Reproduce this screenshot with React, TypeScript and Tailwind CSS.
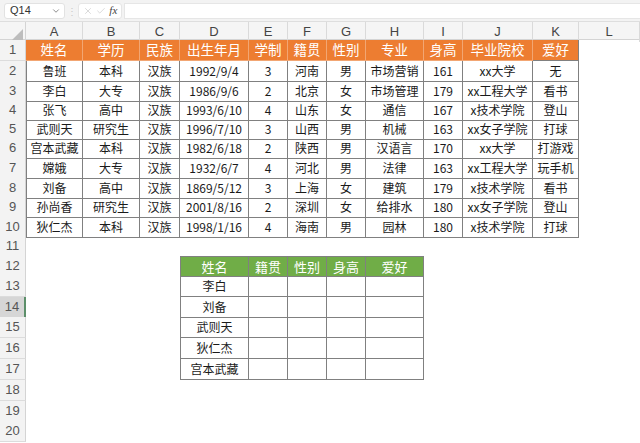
import { ChevronDown, X, Check } from "lucide-react"

const colLetters = ["A", "B", "C", "D", "E", "F", "G", "H", "I", "J", "K", "L"]
const gridCols = "grid grid-cols-[26px_57px_57px_40px_69px_39px_39px_39px_58px_39px_70px_46px_1fr]"

const rowHeights = [
  "h-[21px]", "h-[20px]", "h-[19px]", "h-[19px]", "h-[19px]",
  "h-[20px]", "h-[20px]", "h-[19px]", "h-[20px]", "h-[19px]",
  "h-[20px]", "h-[20px]", "h-[21px]", "h-[20px]", "h-[21px]",
  "h-[21px]", "h-[21px]", "h-[21px]", "h-[20px]", "h-[21px]",
]

const header = ["姓名", "学历", "民族", "出生年月", "学制", "籍贯", "性别", "专业", "身高", "毕业院校", "爱好"]
const data = [
  ["鲁班", "本科", "汉族", "1992/9/4", "3", "河南", "男", "市场营销", "161", "xx大学", "无"],
  ["李白", "大专", "汉族", "1986/9/6", "2", "北京", "女", "市场管理", "179", "xx工程大学", "看书"],
  ["张飞", "高中", "汉族", "1993/6/10", "4", "山东", "女", "通信", "167", "x技术学院", "登山"],
  ["武则天", "研究生", "汉族", "1996/7/10", "3", "山西", "男", "机械", "163", "xx女子学院", "打球"],
  ["宫本武藏", "本科", "汉族", "1982/6/18", "2", "陕西", "男", "汉语言", "170", "xx大学", "打游戏"],
  ["嫦娥", "大专", "汉族", "1932/6/7", "4", "河北", "男", "法律", "163", "xx工程大学", "玩手机"],
  ["刘备", "高中", "汉族", "1869/5/12", "3", "上海", "女", "建筑", "179", "x技术学院", "看书"],
  ["孙尚香", "研究生", "汉族", "2001/8/16", "2", "深圳", "女", "给排水", "180", "xx女子学院", "登山"],
  ["狄仁杰", "本科", "汉族", "1998/1/16", "4", "海南", "男", "园林", "180", "x技术学院", "打球"],
]
const lookupHeader = ["姓名", "籍贯", "性别", "身高", "爱好"]
const lookupNames = ["李白", "刘备", "武则天", "狄仁杰", "宫本武藏"]

function cellsFor(row: number): { text: string; cls: string }[] {
  const out: { text: string; cls: string }[] = []
  for (let c = 0; c < 12; c++) {
    let text = ""
    let cls = ""
    if (row === 1 && c < 11) {
      text = header[c]
      cls = "bg-[#ed7d31] text-white text-[13.5px] border-r border-b border-[#f2a673]"
      if (c === 10) cls = "bg-[#ed7d31] text-white text-[13.5px] border-r border-b border-[#808080]"
    } else if (row >= 2 && row <= 10 && c < 11) {
      text = data[row - 2][c]
      cls = "text-[#1a1a1a] text-[12px] border-r border-b border-[#808080]"
      if (c === 0) cls += " border-l"
    } else if (row === 12 && c >= 3 && c <= 7) {
      text = lookupHeader[c - 3]
      cls = "bg-[#70ad47] text-white text-[13px] border-r border-b border-t border-[#808080]"
      if (c === 3) cls += " border-l"
    } else if (row >= 13 && row <= 17 && c >= 3 && c <= 7) {
      text = c === 3 ? lookupNames[row - 13] : ""
      cls = "text-[#1a1a1a] text-[12px] border-r border-b border-[#808080]"
      if (c === 3) cls += " border-l"
    }
    out.push({ text, cls })
  }
  return out
}

export default function App() {
  return (
    <div
      className="w-[640px] h-[443px] overflow-hidden bg-white"
      style={{ fontFamily: '"Noto Sans CJK SC", "Noto Sans", sans-serif' }}
    >
      {/* formula bar */}
      <div className="h-[22px] bg-[#f3f3f3] flex items-center gap-0 pl-[4px] border-b border-[#dedede]">
        <div className="w-[61px] h-[16px] bg-white rounded-[3px] border border-[#e2e2e2] flex items-center justify-between pl-[5px] pr-[3px]">
          <span className="text-[11px] text-[#333]" style={{ fontFamily: '"Liberation Sans", sans-serif' }}>Q14</span>
          <ChevronDown className="w-[10px] h-[10px] text-[#777]" strokeWidth={2} />
        </div>
        <div className="w-[13px] flex justify-center text-[#c8c8c8] text-[10px] leading-none">⋮</div>
        <div className="w-[44px] h-[16px] bg-white rounded-[3px] border border-[#e6e6e6] flex items-center justify-around px-[2px]">
          <X className="w-[10px] h-[10px] text-[#c4c4c4]" strokeWidth={1.5} />
          <Check className="w-[10px] h-[10px] text-[#c4c4c4]" strokeWidth={1.5} />
          <span className="text-[11px] italic text-[#444]" style={{ fontFamily: '"Liberation Serif", serif' }}>fx</span>
        </div>
        <div className="ml-[2px] flex-1 h-[16px] bg-white border-l border-y border-[#e6e6e6]" />
      </div>

      {/* column headers */}
      <div className={`${gridCols} h-[18px] bg-[#f5f5f5] border-b border-[#d4d4d4]`}>
        <div className="relative border-r border-[#d4d4d4]">
          <div className="absolute right-[2px] bottom-[2px] w-0 h-0 border-l-[11px] border-l-transparent border-b-[11px] border-b-[#bdbdbd]" />
        </div>
        {colLetters.map((l) => (
          <div
            key={l}
            className="flex items-center justify-center text-[13px] text-[#444] border-r border-[#dadada]"
            style={{ fontFamily: '"Liberation Sans", sans-serif' }}
          >
            {l}
          </div>
        ))}
      </div>

      {/* rows */}
      {rowHeights.map((h, i) => {
        const row = i + 1
        const selected = row === 14
        return (
          <div key={row} className={`${gridCols} ${h}`}>
            <div
              className={
                selected
                  ? "flex items-center justify-center text-[13px] text-[#555] bg-[#d6d6d6] border-b border-[#c6c6c6] border-r-2 border-r-[#5c8f6a]"
                  : "flex items-center justify-center text-[13px] text-[#555] bg-[#f3f3f3] border-b border-[#dcdcdc] border-r border-r-[#d4d4d4]"
              }
              style={{ fontFamily: '"Liberation Sans", sans-serif' }}
            >
              {row}
            </div>
            {cellsFor(row).map((cell, c) => (
              <div
                key={c}
                className={`flex items-center justify-center whitespace-nowrap overflow-hidden leading-none ${cell.cls}`}
              >
                {cell.text}
              </div>
            ))}
          </div>
        )
      })}
    </div>
  )
}
